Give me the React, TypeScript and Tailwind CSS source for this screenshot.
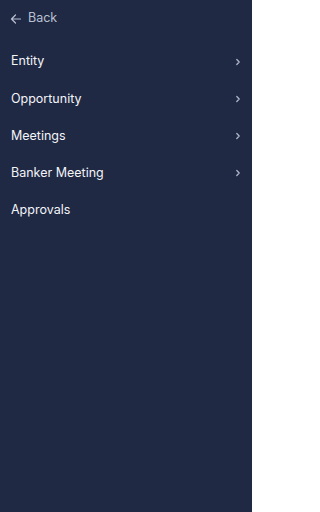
import React from "react";

const items = [
  { label: "Entity", chevron: true },
  { label: "Opportunity", chevron: true },
  { label: "Meetings", chevron: true },
  { label: "Banker Meeting", chevron: true },
  { label: "Approvals", chevron: false },
];

export default function App() {
  return (
    <div
      className="w-[252px] h-[512px] bg-[#1f2944] text-white"
      style={{ fontFamily: "Inter, 'Liberation Sans', sans-serif" }}
    >
      <div className="flex items-center h-[37px] pl-[10px] gap-[6px] text-[#b9c0d2] text-[12.5px]">
        <svg width="12" height="12" viewBox="0 0 12 12" fill="none" stroke="currentColor" strokeWidth="1.2" strokeLinecap="round" strokeLinejoin="round">
          <path d="M10.5 6H1.5M5.5 2L1.5 6L5.5 10" />
        </svg>
        <span>Back</span>
      </div>
      <div className="mt-[6px]">
        {items.map((it) => (
          <div key={it.label} className="flex items-center justify-between h-[37.25px] pl-[11px] pr-[11px] text-[12.5px] text-[#f3f4f8]">
            <span>{it.label}</span>
            {it.chevron && (
              <svg width="6" height="8" viewBox="0 0 6 8" fill="none" stroke="#aeb5c8" strokeWidth="1.3" strokeLinecap="round" strokeLinejoin="round">
                <path d="M1.8 1.5L4.2 4L1.8 6.5" />
              </svg>
            )}
          </div>
        ))}
      </div>
    </div>
  );
}
